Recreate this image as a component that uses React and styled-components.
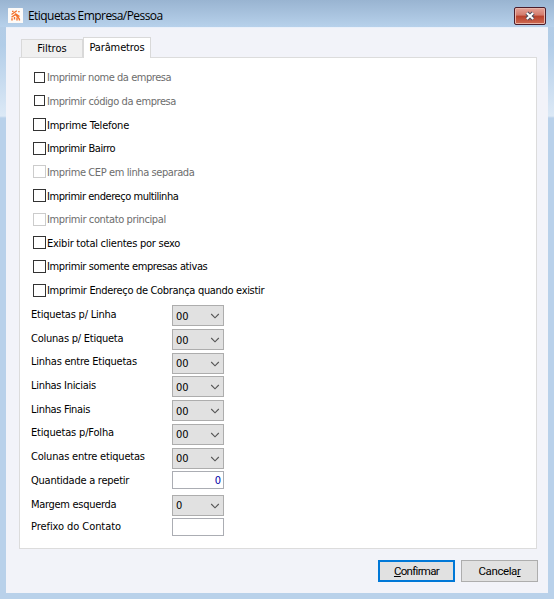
import React from "react";
import styled, { createGlobalStyle } from "styled-components";

const GlobalStyle = createGlobalStyle`
  * {
    box-sizing: border-box;
  }

  body {
    margin: 0;
    overflow: hidden;
  }

  button,
  input {
    font: inherit;
    color: #000;
  }
`;

const Window = styled.div`
  width: 554px;
  height: 599px;
  display: flex;
  flex-direction: column;
  padding: 0 6px 6px;
  background: linear-gradient(
    180deg,
    #99b4d1 0,
    #b3cce6 27px,
    #b2cde8 45px,
    #dce9f6 116px,
    #b9d1ea 118px
  );
  font-family: "DejaVu Sans Condensed", "DejaVu Sans", sans-serif;
  font-stretch: condensed;
  font-size: 11px;
  color: #000;
`;

const TitleBar = styled.header`
  height: 27px;
  flex: none;
  display: flex;
  align-items: flex-start;
  margin: 0 -6px;
  padding: 7px 8px 0;
  background: linear-gradient(180deg, #99b4d1, #b7d1eb);
`;

const AppIcon = styled.svg`
  width: 15px;
  height: 15px;
  margin-top: 1px;
  flex: none;
`;

const Title = styled.h1`
  flex: 1;
  margin: 0 0 0 5px;
  font: 12px/18px "Open Sans", "Noto Sans", sans-serif;
  letter-spacing: -0.56px;
`;

const CloseButton = styled.button`
  width: 32px;
  height: 18px;
  padding: 0;
  display: flex;
  align-items: center;
  justify-content: center;
  border: 1px solid #4b1d2b;
  border-radius: 2px;
  background: linear-gradient(180deg, #e5a298 0, #d37b6c 45%, #b8402b 50%, #ce6a52 100%);
  box-shadow: inset 0 0 0 1px #e9b5a9;
`;

const Client = styled.main`
  flex: 1;
  padding: 9px 11px 0 13px;
  border-top: 1px solid #eaf0fa;
  background: #f2f3f9;
`;

const TabList = styled.div`
  height: 20px;
  display: flex;
  align-items: flex-end;
  padding-left: 2px;
`;

const Tab = styled.button`
  width: ${(p) => (p.$active ? 68 : 62)}px;
  height: ${(p) => (p.$active ? 21 : 18)}px;
  padding: ${(p) => (p.$active ? 0 : 1)}px 0 ${(p) => (p.$active ? 1 : 0)}px;
  margin-bottom: ${(p) => (p.$active ? -1 : 0)}px;
  position: relative;
  border: 1px solid #d9d9d9;
  border-bottom: 0;
  background: ${(p) => (p.$active ? "#fff" : "#f0f0f0")};
  line-height: 16px;
  letter-spacing: ${(p) => p.$tracking || 0}px;
`;

const Panel = styled.section`
  width: 518px;
  height: 492px;
  padding: 8px 0 0 11px;
  border: 1px solid #dcdcdc;
  background: #fff;
`;

const CheckRow = styled.label`
  height: 23.65px;
  display: flex;
  align-items: center;
  padding-left: ${(p) => (p.$small ? 3 : 2)}px;
  gap: ${(p) => (p.$small ? 2 : 1)}px;
  color: ${(p) => (p.$disabled ? "#6d6d6d" : "#000")};
  white-space: nowrap;
`;

const Box = styled.span`
  width: ${(p) => (p.$small ? 11 : 13)}px;
  height: ${(p) => (p.$small ? 11 : 13)}px;
  margin-top: -1px;
  border: 1px solid ${(p) => (p.$faint ? "#cccccc" : "#333")};
  background: #fff;
`;

const Text = styled.span`
  padding-top: 1px;
  line-height: 14px;
  letter-spacing: ${(p) => p.$tracking || 0}px;
`;

const FieldList = styled.div`
  padding-top: 3px;
`;

const FieldRow = styled.div`
  height: 23.7px;
  display: flex;
  align-items: flex-start;

  &:last-child {
    margin-top: -1px;
  }
`;

const FieldLabel = styled.span`
  width: 141px;
  padding-top: 2.6px;
  line-height: 14px;
  letter-spacing: ${(p) => p.$tracking || 0}px;
  white-space: nowrap;
`;

const Select = styled.div`
  width: 52px;
  height: 21px;
  display: flex;
  align-items: center;
  justify-content: space-between;
  padding: 1px 3px 0 3px;
  border: 1px solid #adadad;
  background: #e1e1e1;
`;

const Input = styled.input`
  width: 52px;
  height: 18px;
  padding: 1px 2px 0 0;
  border: 1px solid #abadb3;
  background: #fff;
  color: #0000a8;
  text-align: right;
`;

const Actions = styled.footer`
  display: flex;
  justify-content: flex-end;
  gap: 6px;
  margin-top: 11px;
  margin-right: -1px;
`;

const ActionButton = styled.button`
  width: 77px;
  height: 22px;
  padding: 0;
  border: ${(p) => (p.$primary ? "2px solid #0078d7" : "1px solid #adadad")};
  background: #e1e1e1;
  font: 11.5px "Roboto", sans-serif;
  letter-spacing: ${(p) => p.$tracking || 0}px;
`;

const options = [
  { label: "Imprimir nome da empresa", disabled: true, small: true, tracking: -0.46 },
  { label: "Imprimir código da empresa", disabled: true, small: true, tracking: -0.42 },
  { label: "Imprime Telefone", tracking: -0.22 },
  { label: "Imprimir Bairro", tracking: -0.43 },
  { label: "Imprime CEP em linha separada", disabled: true, faint: true, tracking: -0.4 },
  { label: "Imprimir endereço multilinha", tracking: -0.45 },
  { label: "Imprimir contato principal", disabled: true, faint: true, tracking: -0.38 },
  { label: "Exibir total clientes por sexo", tracking: -0.25 },
  { label: "Imprimir somente empresas ativas", tracking: -0.39 },
  { label: "Imprimir Endereço de Cobrança quando existir", tracking: -0.32 },
];

const fields = [
  { label: "Etiquetas p/ Linha", value: "00", tracking: -0.22 },
  { label: "Colunas p/ Etiqueta", value: "00", tracking: -0.24 },
  { label: "Linhas entre Etiquetas", value: "00", tracking: -0.24 },
  { label: "Linhas Iniciais", value: "00", tracking: -0.3 },
  { label: "Linhas Finais", value: "00", tracking: -0.3 },
  { label: "Etiquetas p/Folha", value: "00", tracking: -0.17 },
  { label: "Colunas entre etiquetas", value: "00", tracking: -0.2 },
  { label: "Quantidade a repetir", value: "0", input: true, tracking: -0.25 },
  { label: "Margem esquerda", value: "0", tracking: -0.3 },
  { label: "Prefixo do Contato", value: "", input: true, tracking: -0.07 },
];

const Chevron = () => (
  <svg width="10" height="6" viewBox="0 0 10 6" fill="none">
    <path d="M1.2 1 5 4.8 8.8 1" stroke="#555" strokeWidth="1.1" />
  </svg>
);

const App = () => (
  <>
    <GlobalStyle />
    <Window>
      <TitleBar>
        <AppIcon viewBox="0 0 15 15">
          <rect width="15" height="15" rx="0.5" fill="#fcfaf8" />
          <g fill="none" stroke="#f4702a" strokeWidth="1.4">
            <path d="M3.5 6.5 8.8 2.8M7.2 5.5 11.5 8.5M3.5 9.3 7.5 6.5 11.5 11" />
            <path d="M4 12.5V10.2M6.5 11.5V9M9 12.5V9.5M11.4 12.5V11" />
            <path d="M4 3.4h1.6M10.2 3.6h1.4" />
          </g>
        </AppIcon>
        <Title>Etiquetas Empresa/Pessoa</Title>
        <CloseButton aria-label="Fechar">
          <svg width="12" height="10" viewBox="0 0 12 10" fill="none">
            <path d="m2.8 2 6.4 6m0-6-6.4 6" stroke="#4b4c5c" strokeWidth="4" />
            <path d="m2.8 2 6.4 6m0-6-6.4 6" stroke="#fff" strokeWidth="2.1" />
          </svg>
        </CloseButton>
      </TitleBar>

      <Client>
        <TabList>
          <Tab>Filtros</Tab>
          <Tab $active $tracking={-0.12}>
            Parâmetros
          </Tab>
        </TabList>
        <Panel>
          {options.map((o) => (
            <CheckRow key={o.label} $disabled={o.disabled} $small={o.small}>
              <Box $small={o.small} $faint={o.faint} />
              <Text $tracking={o.tracking}>{o.label}</Text>
            </CheckRow>
          ))}
          <FieldList>
            {fields.map((f) => (
              <FieldRow key={f.label}>
                <FieldLabel $tracking={f.tracking}>{f.label}</FieldLabel>
                {f.input ? (
                  <Input aria-label={f.label} defaultValue={f.value} />
                ) : (
                  <Select>
                    <span>{f.value}</span>
                    <Chevron />
                  </Select>
                )}
              </FieldRow>
            ))}
          </FieldList>
        </Panel>
        <Actions>
          <ActionButton $primary $tracking={-0.7}>
            <u>C</u>onfirmar
          </ActionButton>
          <ActionButton $tracking={-0.4}>
            Cancela<u>r</u>
          </ActionButton>
        </Actions>
      </Client>
    </Window>
  </>
);

export default App;
